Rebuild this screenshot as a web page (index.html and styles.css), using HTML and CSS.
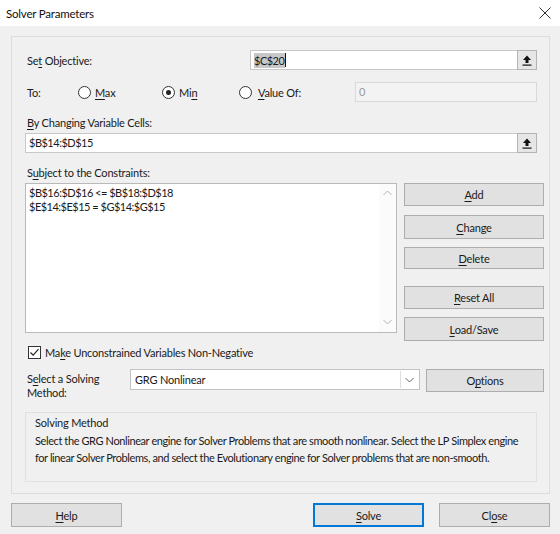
FILE: index.html
```html
<!DOCTYPE html>
<html lang="en">
<head>
    <meta charset="UTF-8">
    <title>Solver Parameters</title>
    <link rel="stylesheet" href="styles.css">
</head>
<body>
    <div class="titlebar">
        <span class="title">Solver Parameters</span>
        <svg class="close-x" width="12" height="12" viewBox="0 0 12 12">
            <path d="M0.5 0.5 L11.5 11.5 M11.5 0.5 L0.5 11.5" stroke="#333" stroke-width="1" fill="none"/>
        </svg>
    </div>

    <div class="dialog">
        <div class="panel">
            <div class="row objective-row">
                <span class="field-label">Se<u>t</u> Objective:</span>
                <div class="ref-input objective-input">
                    <span class="text ref-text"><span class="selected">$C$20</span><span class="caret"></span></span>
                    <span class="ref-button">
                        <svg width="10" height="11" viewBox="0 0 10 11">
                            <path d="M5 0.5 L9 5 L6.5 5 L6.5 8 L3.5 8 L3.5 5 L1 5 Z" fill="#111"/>
                            <rect x="0.5" y="9.5" width="9" height="1.2" fill="#111"/>
                        </svg>
                    </span>
                </div>
            </div>

            <div class="row to-row">
                <span class="to-label">To:</span>
                <label class="radio radio-max"><span class="circle"></span><span><u>M</u>ax</span></label>
                <label class="radio radio-min"><span class="circle checked"></span><span>Mi<u>n</u></span></label>
                <label class="radio radio-value"><span class="circle"></span><span><u>V</u>alue Of:</span></label>
                <div class="value-input">0</div>
            </div>

            <div class="caption changing-caption"><u>B</u>y Changing Variable Cells:</div>
            <div class="ref-input changing-input">
                <span class="text ref-text">$B$14:$D$15</span>
                <span class="ref-button">
                    <svg width="10" height="11" viewBox="0 0 10 11">
                        <path d="M5 0.5 L9 5 L6.5 5 L6.5 8 L3.5 8 L3.5 5 L1 5 Z" fill="#111"/>
                        <rect x="0.5" y="9.5" width="9" height="1.2" fill="#111"/>
                    </svg>
                </span>
            </div>

            <div class="caption constraints-caption">S<u>u</u>bject to the Constraints:</div>
            <div class="constraints-row">
                <div class="listbox">
                    <div class="list-items ref-text">
                        <div>$B$16:$D$16 &lt;= $B$18:$D$18</div>
                        <div>$E$14:$E$15 = $G$14:$G$15</div>
                    </div>
                    <div class="scrollbar">
                        <svg width="9" height="6" viewBox="0 0 9 6"><path d="M0.5 5 L4.5 1 L8.5 5" stroke="#b4b4b4" fill="none"/></svg>
                        <svg width="9" height="6" viewBox="0 0 9 6"><path d="M0.5 1 L4.5 5 L8.5 1" stroke="#b4b4b4" fill="none"/></svg>
                    </div>
                </div>
                <div class="side-buttons">
                    <button class="btn btn-add"><u>A</u>dd</button>
                    <button class="btn btn-change"><u>C</u>hange</button>
                    <button class="btn btn-delete"><u>D</u>elete</button>
                    <button class="btn btn-reset"><u>R</u>eset All</button>
                    <button class="btn btn-load"><u>L</u>oad/Save</button>
                </div>
            </div>

            <label class="checkbox-row">
                <span class="checkbox">
                    <svg width="11" height="11" viewBox="0 0 11 11"><path d="M1.5 5.5 L4.2 8.2 L9.5 2.2" stroke="#222" stroke-width="1.2" fill="none"/></svg>
                </span>
                <span>Ma<u>k</u>e Unconstrained Variables Non-Negative</span>
            </label>

            <div class="method-row">
                <div class="method-label">S<u>e</u>lect a Solving<br>Method:</div>
                <div class="select">
                    <span class="select-text">GRG Nonlinear</span>
                    <span class="select-arrow">
                        <svg width="9" height="6" viewBox="0 0 9 6"><path d="M0.5 1 L4.5 5 L8.5 1" stroke="#666" fill="none"/></svg>
                    </span>
                </div>
                <button class="btn btn-options">O<u>p</u>tions</button>
            </div>

            <div class="method-group">
                <div class="group-title">Solving Method</div>
                <p class="group-text">Select the GRG Nonlinear engine for Solver Problems that are smooth nonlinear. Select the LP Simplex engine for linear Solver Problems, and select the Evolutionary engine for Solver problems that are non-smooth.</p>
            </div>
        </div>

        <div class="footer">
            <button class="btn btn-footer"><u>H</u>elp</button>
            <div class="footer-right">
                <button class="btn btn-footer btn-default"><u>S</u>olve</button>
                <button class="btn btn-footer">Cl<u>o</u>se</button>
            </div>
        </div>
    </div>
</body>
</html>
```

FILE: styles.css
```css
* {
    box-sizing: border-box;
}
body {
    margin: 0;
    width: 560px;
    height: 534px;
    background-color: #f0f0f0;
    color: #1a1a1a;
    font-family: 'Lato', 'Noto Sans', sans-serif;
    font-size: 11px;
    letter-spacing: -0.2px;
    overflow: hidden;
}
u {
    text-decoration-thickness: 1px;
    text-underline-offset: 2px;
}
.titlebar {
    height: 26px;
    background-color: white;
    display: flex;
    align-items: center;
    justify-content: space-between;
    padding: 0 9px 0 6px;
}
.title {
    font-size: 11.5px;
    color: #111;
}
.dialog {
    padding: 10px 10px 0 11px;
}
.panel {
    height: 458px;
    border: 1px solid #dcdcdc;
    padding: 0 5px 0 13px;
}
.row {
    display: flex;
    align-items: center;
}
.field-label {
    width: 225px;
    padding-left: 2px;
}
.objective-row {
    margin-top: 13px;
    height: 20px;
}
.ref-input {
    display: flex;
    height: 20px;
    width: 512px;
    background-color: white;
    border: 1px solid #c8c8c8;
}
.objective-input {
    width: 287px;
}
.ref-input .text {
    flex: 1;
    padding-left: 3px;
    line-height: 18px;
    display: flex;
    align-items: center;
}
.ref-text {
    letter-spacing: -0.5px;
}
.selected {
    background-color: #c8c8c8;
    line-height: 15px;
    padding-right: 1px;
}
.caret {
    display: inline-block;
    width: 1px;
    height: 14px;
    background-color: #111;
}
.ref-button {
    width: 20px;
    margin: -1px -1px -1px 0;
    border: 1px solid #b4b4b4;
    background-color: #e6e6e6;
    display: flex;
    align-items: center;
    justify-content: center;
}
.to-row {
    margin-top: 12px;
    height: 20px;
}
.to-label {
    width: 53px;
    padding-left: 2px;
}
.radio {
    display: flex;
    align-items: center;
    gap: 4px;
}
.radio-max {
    width: 84px;
}
.radio-min {
    width: 77px;
}
.radio-value {
    width: 116px;
    gap: 6px;
}
.circle {
    width: 13px;
    height: 13px;
    border: 1px solid #333;
    border-radius: 50%;
    background-color: white;
    position: relative;
}
.circle.checked::after {
    content: '';
    position: absolute;
    left: 3px;
    top: 3px;
    width: 5px;
    height: 5px;
    border-radius: 50%;
    background-color: #222;
}
.value-input {
    width: 182px;
    height: 20px;
    border: 1px solid #d9d9d9;
    background-color: #f3f3f3;
    color: #9a9a9a;
    padding-left: 3px;
    line-height: 18px;
}
.caption {
    height: 16px;
    line-height: 16px;
    padding-left: 2px;
}
.changing-caption {
    margin-top: 13px;
}
.changing-input {
    margin-top: 2px;
}
.constraints-caption {
    margin-top: 12px;
}
.constraints-row {
    margin-top: 2px;
    height: 150px;
    display: flex;
    align-items: flex-start;
    gap: 7px;
}
.listbox {
    width: 372px;
    height: 150px;
    background-color: white;
    border: 1px solid #b9b9b9;
    display: flex;
}
.list-items {
    flex: 1;
    padding: 2px 0 0 3px;
    line-height: 14px;
}
.scrollbar {
    width: 17px;
    display: flex;
    flex-direction: column;
    justify-content: space-between;
    align-items: center;
    padding: 6px 0 7px;
    background-color: #fbfbfb;
}
.side-buttons {
    display: flex;
    flex-direction: column;
    width: 140px;
}
.btn {
    font-family: inherit;
    font-size: 11px;
    letter-spacing: -0.2px;
    color: #1a1a1a;
    background-color: #e1e1e1;
    border: 1px solid #adadad;
    padding: 0;
    height: 23px;
}
.btn-change {
    margin-top: 9px;
    height: 24px;
}
.btn-delete {
    margin-top: 8px;
    height: 22px;
}
.btn-reset {
    margin-top: 17px;
}
.btn-load {
    margin-top: 8px;
    height: 24px;
}
.checkbox-row {
    margin-top: 11px;
    height: 16px;
    display: flex;
    align-items: center;
    gap: 4px;
    padding-left: 3px;
}
.checkbox {
    width: 13px;
    height: 13px;
    border: 1px solid #333;
    background-color: white;
    display: flex;
    align-items: center;
    justify-content: center;
}
.method-row {
    margin-top: 9px;
    height: 23px;
    display: flex;
}
.method-label {
    width: 105px;
    padding: 3px 0 0 2px;
    line-height: 13.5px;
}
.select {
    width: 290px;
    height: 21px;
    background-color: white;
    border: 1px solid #c3c3c3;
    display: flex;
}
.select-text {
    flex: 1;
    padding-left: 4px;
    line-height: 19px;
}
.select-arrow {
    width: 18px;
    margin: 1px 1px 1px 0;
    border-left: 1px solid #dedede;
    display: flex;
    align-items: center;
    justify-content: center;
}
.btn-options {
    margin-left: 6px;
    width: 118px;
}
.method-group {
    margin-top: 20px;
    width: 512px;
    height: 70px;
    border: 1px solid #e0e0e0;
    padding: 2px 9px;
}
.group-title {
    line-height: 16px;
}
.group-text {
    margin: 2px 0 0;
    line-height: 16.5px;
    letter-spacing: -0.4px;
}
.footer {
    margin-top: 9px;
    display: flex;
    justify-content: space-between;
}
.footer-right {
    display: flex;
    gap: 15px;
}
.btn-footer {
    width: 111px;
    height: 24px;
}
.btn-default {
    border: 1px solid #0078d7;
    box-shadow: inset 0 0 0 1px #0078d7;
}
```
